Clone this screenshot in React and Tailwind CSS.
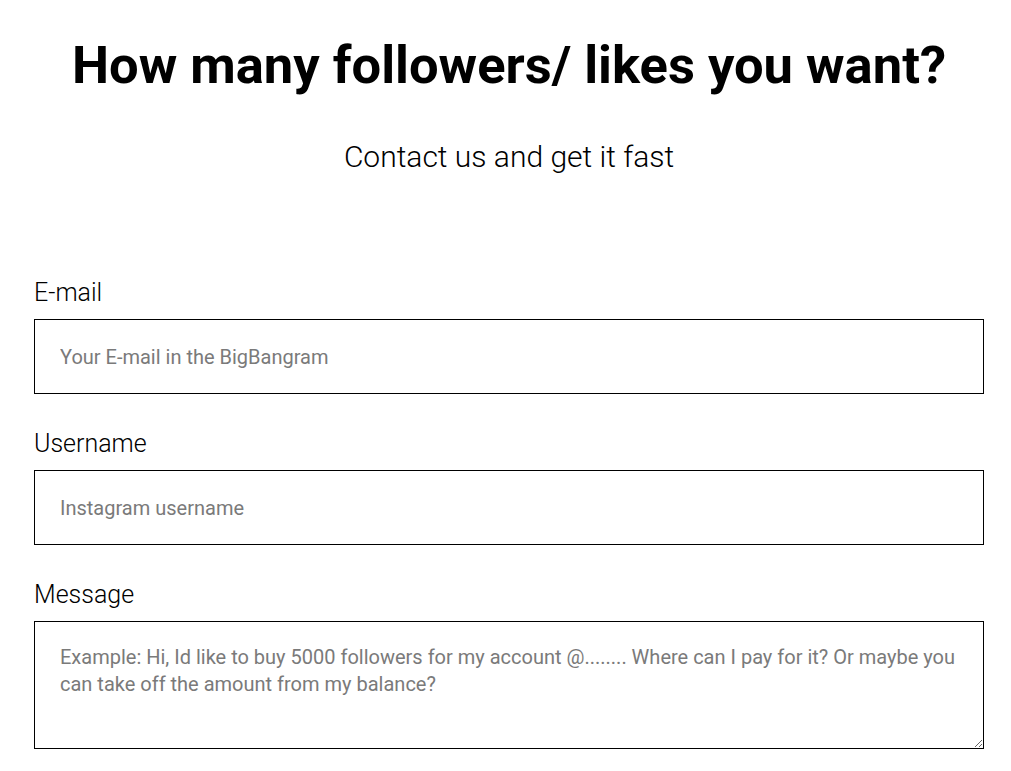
import React from "react";

export default function App() {
  const font = { fontFamily: "Roboto, 'Liberation Sans', sans-serif" };
  return (
    <div className="bg-white min-h-[771px] pl-[34px] pr-[27px] pt-[33px] text-black" style={font}>
      <h1 className="text-center text-[52.5px] leading-[64px] font-bold">How many followers/ likes you want?</h1>
      <p className="text-center text-[30px] leading-[40px] font-light mt-[40px]">Contact us and get it fast</p>
      <form className="mt-[101px] flex flex-col">
        <label className="text-[25px] leading-[30px] font-light">E-mail</label>
        <input
          type="email"
          placeholder="Your E-mail in the BigBangram"
          className="mt-[11px] h-[75px] w-full border border-black px-[25px] text-[20px] placeholder:text-[#7a7a7a] outline-none"
        />
        <label className="mt-[35px] text-[25px] leading-[30px] font-light">Username</label>
        <input
          type="text"
          placeholder="Instagram username"
          className="mt-[11px] h-[75px] w-full border border-black px-[25px] text-[20px] placeholder:text-[#7a7a7a] outline-none"
        />
        <label className="mt-[35px] text-[25px] leading-[30px] font-light">Message</label>
        <textarea
          placeholder="Example: Hi, Id like to buy 5000 followers for my account @........ Where can I pay for it? Or maybe you can take off the amount from my balance?"
          className="mt-[11px] h-[128px] w-full border border-black px-[25px] pt-[22px] text-[20px] leading-[27px] placeholder:text-[#7a7a7a] outline-none"
        />
      </form>
    </div>
  );
}
